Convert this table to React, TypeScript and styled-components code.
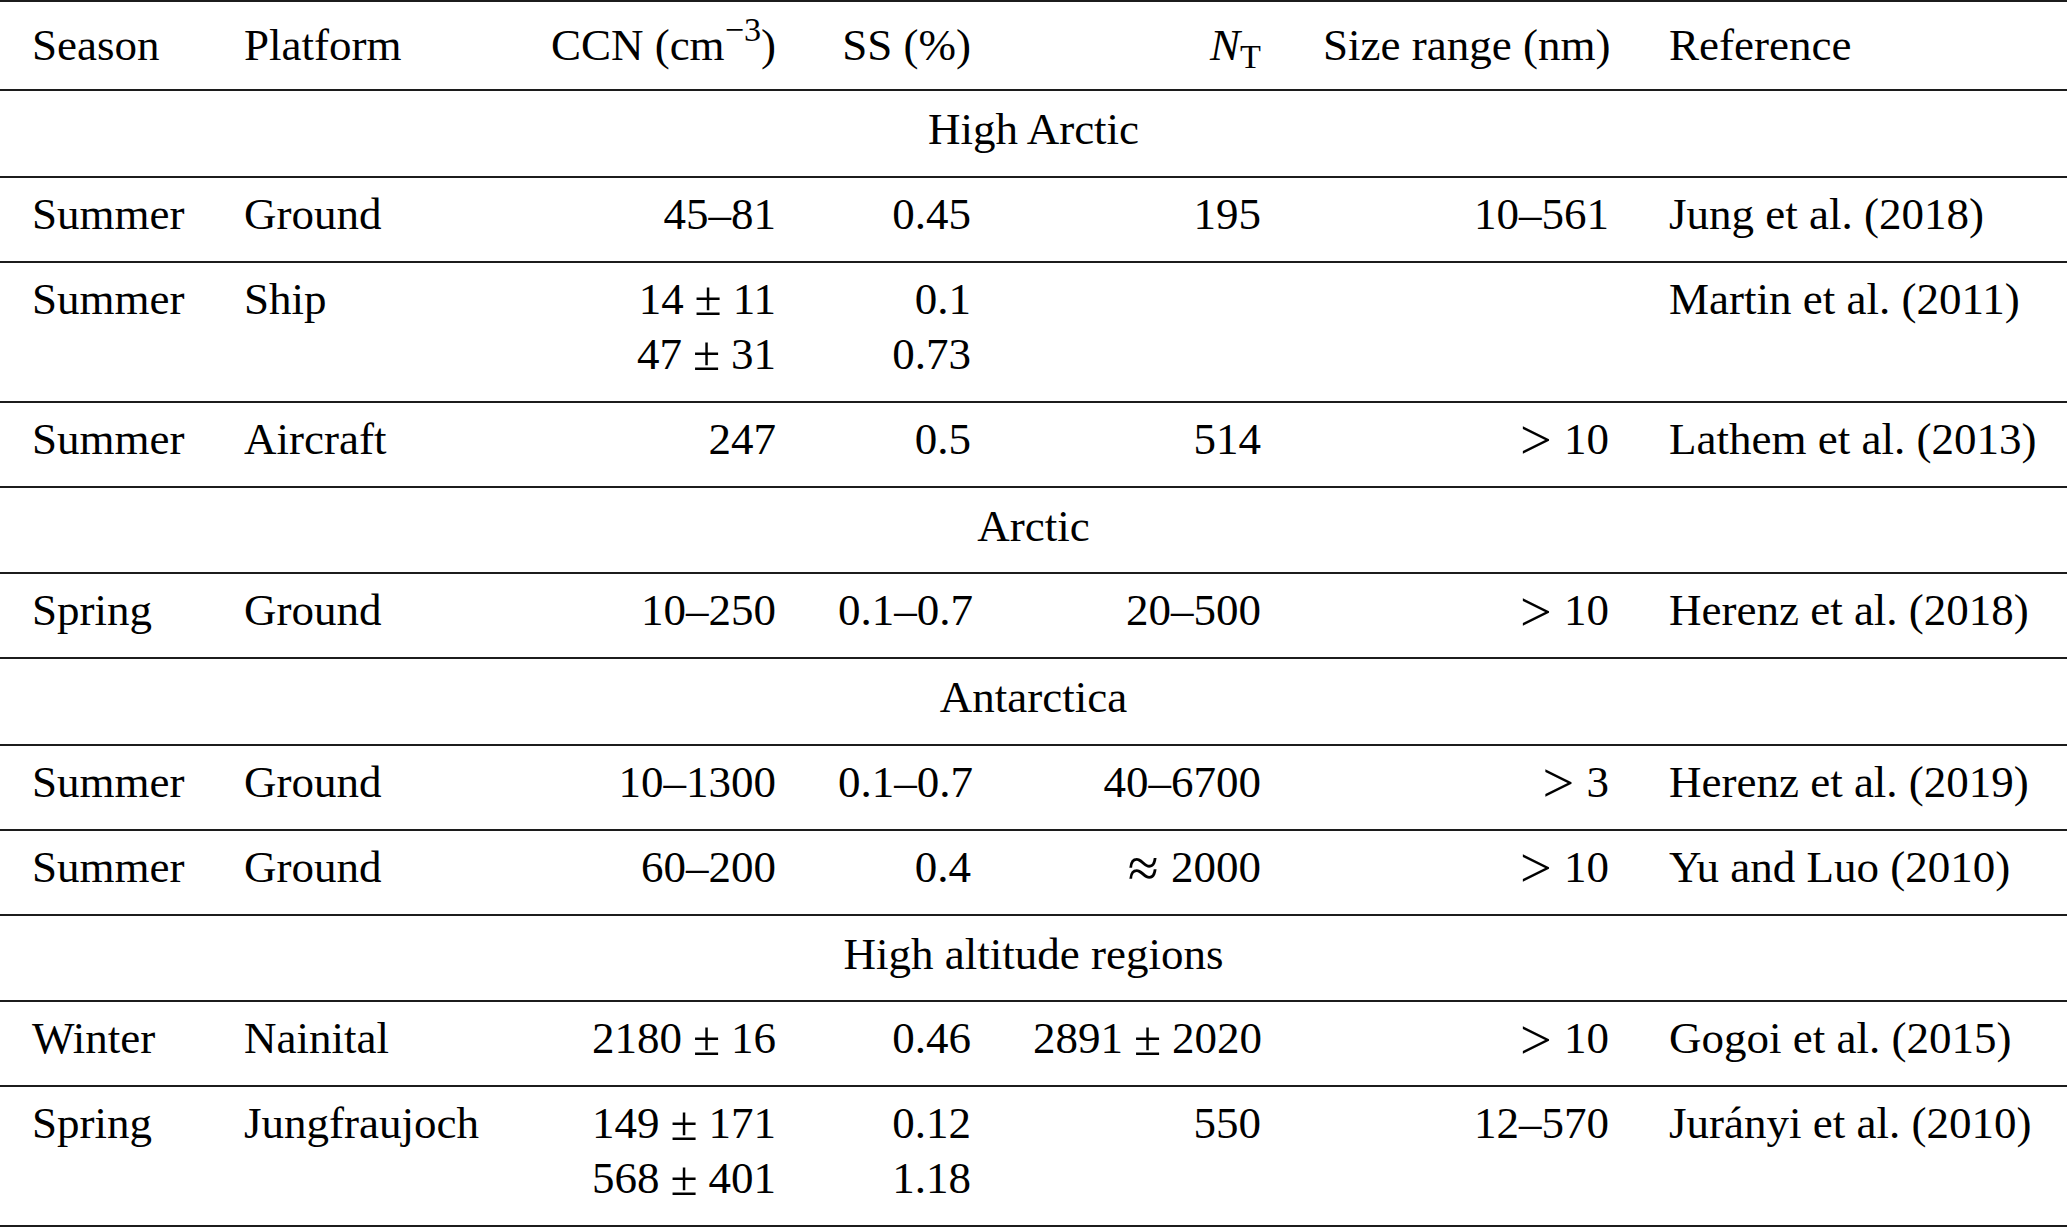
import React from "react";
import styled, { createGlobalStyle } from "styled-components";

const GlobalStyle = createGlobalStyle`
  html, body {
    margin: 0;
    padding: 0;
    background: #ffffff;
  }
  body {
    font-family: "Liberation Serif", "Times New Roman", serif;
    color: #000000;
  }
`;

const RULE = "2px solid #1c1c1c";
const COLUMNS = "213px 292px 302px 195px 290px 348px 1fr";

const Table = styled.div`
  width: 100%;
  border-bottom: ${RULE};
  font-size: 45px;
  line-height: 55px;
`;

type RowKind = "head" | "section" | "data";

const rowPadding: Record<RowKind, string> = {
  head: "16px 0 16px",
  section: "11px 0 18.5px",
  data: "9px 0 19px",
};

const Row = styled.div<{ $kind: RowKind }>`
  display: grid;
  grid-template-columns: ${COLUMNS};
  border-top: ${RULE};
  padding: ${(p) => rowPadding[p.$kind]};
`;

const Cell = styled.div<{ $align?: "left" | "right" }>`
  padding: 0 31px;
  text-align: ${(p) => p.$align ?? "left"};
  white-space: nowrap;

  &:first-child {
    padding-left: 32px;
  }
  &:last-child {
    padding-left: 29px;
  }
`;

const SectionTitle = styled.div`
  grid-column: 1 / -1;
  text-align: center;
`;

const Sup = styled.sup`
  font-size: 0.76em;
  line-height: 0;
  vertical-align: 0.56em;
`;

const Sub = styled.sub`
  font-size: 0.76em;
  line-height: 0;
  vertical-align: -0.24em;
`;

const Italic = styled.span`
  font-style: italic;
`;

/* binary operator (±), a little larger like the math font */
const Op = styled.span`
  font-size: 1.1em;
  line-height: 0;
  margin: 0 0.22em;
  vertical-align: -0.04em;
`;

/* relation (>, ≈) at the start of a value */
const Rel = styled.span`
  font-size: 1.25em;
  line-height: 0;
  margin-right: 0.22em;
  vertical-align: -0.1em;
`;

const pm = (a: string, b: string) => (
  <>
    {a}
    <Op>±</Op>
    {b}
  </>
);

const rel = (sign: string, v: string) => (
  <>
    <Rel>{sign}</Rel>
    {v}
  </>
);

type Entry = {
  season: string;
  platform: string;
  ccn: React.ReactNode[];
  ss: string[];
  nt?: React.ReactNode;
  size?: React.ReactNode;
  ref: string;
};

type Section = { title: string; rows: Entry[] };

const sections: Section[] = [
  {
    title: "High Arctic",
    rows: [
      { season: "Summer", platform: "Ground", ccn: ["45–81"], ss: ["0.45"], nt: "195", size: "10–561", ref: "Jung et al. (2018)" },
      { season: "Summer", platform: "Ship", ccn: [pm("14", "11"), pm("47", "31")], ss: ["0.1", "0.73"], ref: "Martin et al. (2011)" },
      { season: "Summer", platform: "Aircraft", ccn: ["247"], ss: ["0.5"], nt: "514", size: rel(">", "10"), ref: "Lathem et al. (2013)" },
    ],
  },
  {
    title: "Arctic",
    rows: [
      { season: "Spring", platform: "Ground", ccn: ["10–250"], ss: ["0.1–0.7"], nt: "20–500", size: rel(">", "10"), ref: "Herenz et al. (2018)" },
    ],
  },
  {
    title: "Antarctica",
    rows: [
      { season: "Summer", platform: "Ground", ccn: ["10–1300"], ss: ["0.1–0.7"], nt: "40–6700", size: rel(">", "3"), ref: "Herenz et al. (2019)" },
      { season: "Summer", platform: "Ground", ccn: ["60–200"], ss: ["0.4"], nt: rel("≈", "2000"), size: rel(">", "10"), ref: "Yu and Luo (2010)" },
    ],
  },
  {
    title: "High altitude regions",
    rows: [
      { season: "Winter", platform: "Nainital", ccn: [pm("2180", "16")], ss: ["0.46"], nt: pm("2891", "2020"), size: rel(">", "10"), ref: "Gogoi et al. (2015)" },
      { season: "Spring", platform: "Jungfraujoch", ccn: [pm("149", "171"), pm("568", "401")], ss: ["0.12", "1.18"], nt: "550", size: "12–570", ref: "Jurányi et al. (2010)" },
    ],
  },
];

const Lines = ({ items }: { items: React.ReactNode[] }) => (
  <>
    {items.map((item, i) => (
      <div key={i}>{item}</div>
    ))}
  </>
);

export default function App() {
  return (
    <>
      <GlobalStyle />
      <Table>
        <Row $kind="head">
          <Cell>Season</Cell>
          <Cell>Platform</Cell>
          <Cell $align="right">
            CCN (cm<Sup>−3</Sup>)
          </Cell>
          <Cell $align="right">SS (%)</Cell>
          <Cell $align="right">
            <Italic>N</Italic>
            <Sub>T</Sub>
          </Cell>
          <Cell $align="right">Size range (nm)</Cell>
          <Cell>Reference</Cell>
        </Row>
        {sections.map((section) => (
          <React.Fragment key={section.title}>
            <Row $kind="section">
              <SectionTitle>{section.title}</SectionTitle>
            </Row>
            {section.rows.map((r, i) => (
              <Row $kind="data" key={i}>
                <Cell>{r.season}</Cell>
                <Cell>{r.platform}</Cell>
                <Cell $align="right">
                  <Lines items={r.ccn} />
                </Cell>
                <Cell $align="right">
                  <Lines items={r.ss} />
                </Cell>
                <Cell $align="right">{r.nt}</Cell>
                <Cell $align="right">{r.size}</Cell>
                <Cell>{r.ref}</Cell>
              </Row>
            ))}
          </React.Fragment>
        ))}
      </Table>
    </>
  );
}
